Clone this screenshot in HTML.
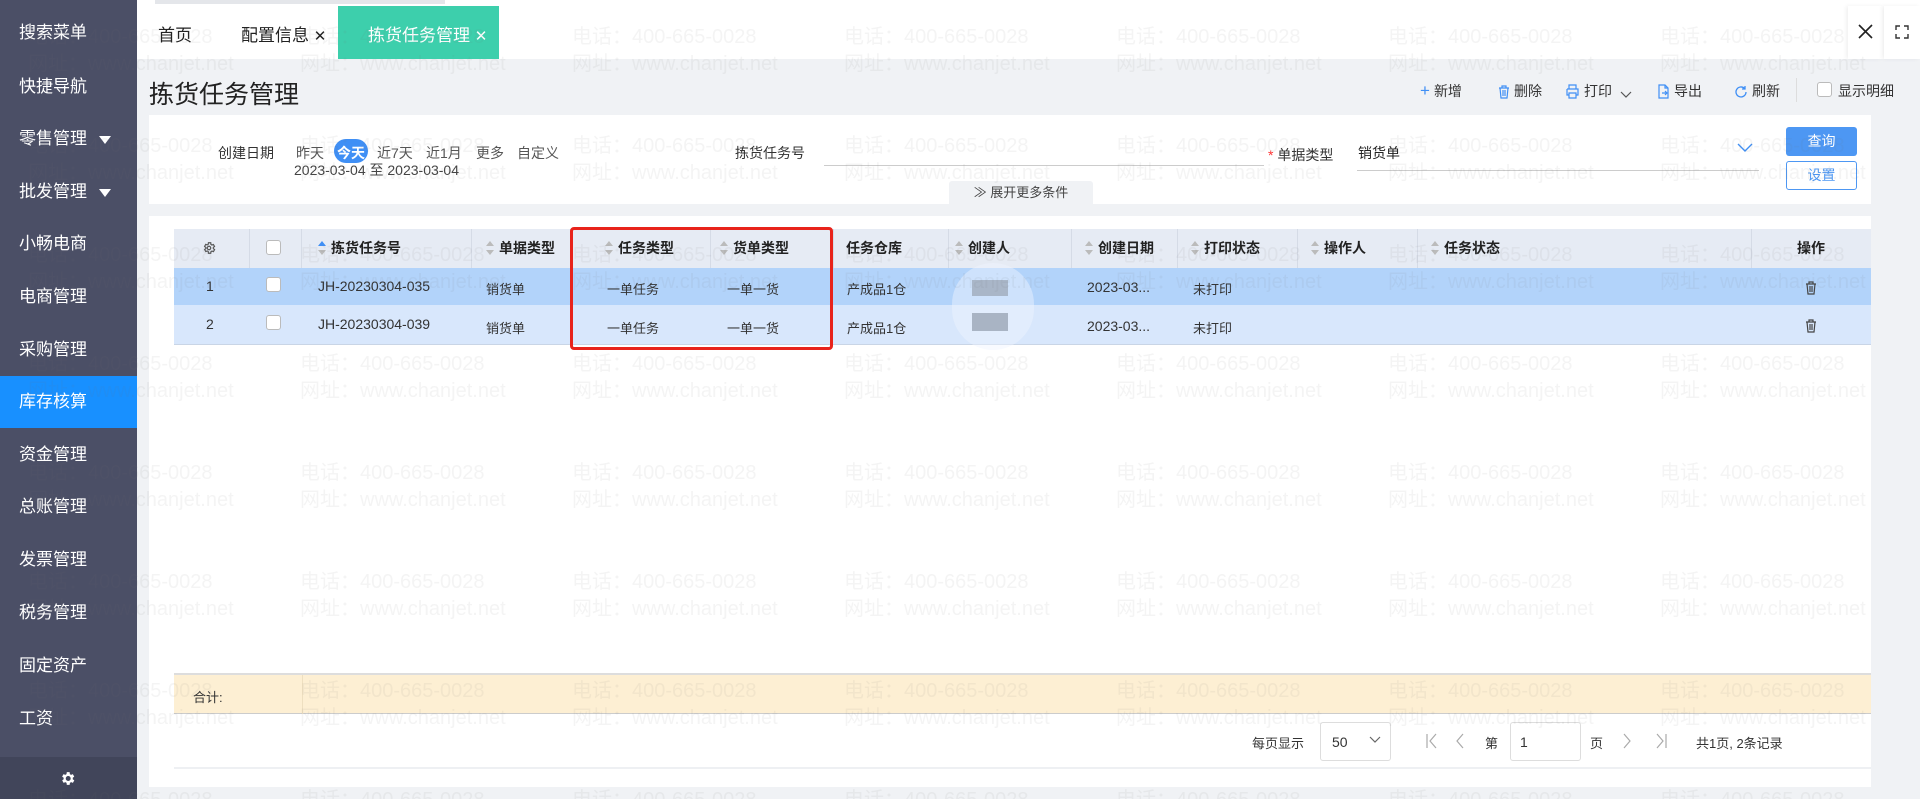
<!DOCTYPE html>
<html style="height:799px;overflow:hidden"><head><meta charset="utf-8">
<style>
*{margin:0;padding:0;box-sizing:border-box}
body{width:1920px;height:799px;position:relative;overflow:hidden;background:#f0f2f5;font-family:"Liberation Sans","Noto Sans CJK SC",sans-serif;color:#333;font-size:14px}
.a{position:absolute;white-space:nowrap}
#side{position:absolute;left:0;top:0;width:137px;height:799px;background:#4b4f66}
.si{position:absolute;left:0;width:137px;height:52px;line-height:52px;padding-left:19px;color:#fff;font-size:17px}
.si.act{background:#1890ff}
.tri{display:inline-block;width:0;height:0;border-left:6px solid transparent;border-right:6px solid transparent;border-top:8px solid #fff;margin-left:12px;vertical-align:middle}
.th{position:absolute;top:229px;height:39px;line-height:39px;font-weight:bold;font-size:14px;color:#222}
.sort{display:inline-block;width:8px;height:14px;vertical-align:middle;margin-right:5px;position:relative;top:-1px}
.sort:before{content:"";position:absolute;left:0;top:0;border-left:4px solid transparent;border-right:4px solid transparent;border-bottom:5px solid #bbb}
.sort:after{content:"";position:absolute;left:0;bottom:0;border-left:4px solid transparent;border-right:4px solid transparent;border-top:5px solid #bbb}
.sort.up:before{border-bottom-color:#3f8ff5}
.vl{position:absolute;top:229px;width:1px;height:39px;background:#d5dbe6}
.td{position:absolute;font-size:13px;color:#333}
.cb{position:absolute;width:15px;height:15px;border:1px solid #bbb;border-radius:3px;background:#fff}
.wm{position:absolute;font-size:20px;color:rgba(110,110,110,0.08);white-space:nowrap;pointer-events:none;z-index:50}
.tb{position:absolute;top:81px;font-size:14px;color:#333}
.tb svg{vertical-align:-3px;margin-right:4px}
</style></head><body>

<div id="side">
<div class="si" style="top:7px">搜索菜单</div>
<div class="si" style="top:61px">快捷导航</div>
<div class="si" style="top:113px">零售管理<span class="tri"></span></div>
<div class="si" style="top:166px">批发管理<span class="tri"></span></div>
<div class="si" style="top:218px">小畅电商</div>
<div class="si" style="top:271px">电商管理</div>
<div class="si" style="top:324px">采购管理</div>
<div class="si act" style="top:376px">库存核算</div>
<div class="si" style="top:429px">资金管理</div>
<div class="si" style="top:481px">总账管理</div>
<div class="si" style="top:534px">发票管理</div>
<div class="si" style="top:587px">税务管理</div>
<div class="si" style="top:640px">固定资产</div>
<div class="si" style="top:693px">工资</div>
<div style="position:absolute;left:0;top:757px;width:137px;height:42px;background:#41455a"></div>
<svg class="a" style="left:59px;top:770px" width="17" height="17" viewBox="0 0 24 24"><path fill="#fff" d="M19.4 13a7.5 7.5 0 000-2l2.1-1.6-2-3.5-2.5 1a7.6 7.6 0 00-1.7-1L15 3h-4l-.4 2.8a7.6 7.6 0 00-1.7 1l-2.5-1-2 3.5L6.6 11a7.5 7.5 0 000 2l-2.1 1.6 2 3.5 2.5-1a7.6 7.6 0 001.7 1L11 21h4l.4-2.8a7.6 7.6 0 001.7-1l2.5 1 2-3.5zM13 15.5a3.5 3.5 0 110-7 3.5 3.5 0 010 7z"/></svg>
</div>

<div style="position:absolute;left:137px;top:0;width:1783px;height:59px;background:#fff"></div>
<div style="position:absolute;left:155px;top:0;width:290px;height:4px;background:#e4e6ea"></div>
<div class="a" style="left:158px;top:21px;font-size:17px;color:#222">首页</div>
<div class="a" style="left:241px;top:21px;font-size:17px;color:#222">配置信息 <span style="font-size:15px">✕</span></div>
<div style="position:absolute;left:338px;top:6px;width:161px;height:53px;background:#3dcfac"></div>
<div class="a" style="left:368px;top:21px;font-size:17px;color:#fff">拣货任务管理 <span style="font-size:15px">✕</span></div>
<div style="position:absolute;left:1848px;top:6px;width:35px;height:53px;background:#fff;box-shadow:-2px 0 4px rgba(0,0,0,.06)"></div>
<div style="position:absolute;left:1884px;top:6px;width:36px;height:53px;background:#fff;box-shadow:-2px 0 4px rgba(0,0,0,.06)"></div>
<svg class="a" style="left:1858px;top:24px" width="15" height="15" viewBox="0 0 15 15"><path d="M1 1L14 14M14 1L1 14" stroke="#222" stroke-width="1.6"/></svg>
<svg class="a" style="left:1895px;top:25px" width="14" height="14" viewBox="0 0 14 14"><path d="M1 5V1h4M9 1h4v4M13 9v4H9M5 13H1V9" fill="none" stroke="#333" stroke-width="1.4"/></svg>

<div class="a" style="left:149px;top:75px;font-size:25px;color:#222">拣货任务管理</div>
<div class="tb" style="left:1420px"><span style="color:#3f8ff5;font-size:17px;margin-right:4px">+</span>新增</div>
<div class="tb" style="left:1498px"><svg width="12" height="15" viewBox="0 0 12 15"><path d="M1 4h10M4 4V2h4v2M2 4l1 10h6l1-10M5 6v6M7 6v6" fill="none" stroke="#3f8ff5" stroke-width="1.2"/></svg>删除</div>
<div class="tb" style="left:1565px"><svg width="15" height="15" viewBox="0 0 15 15"><path d="M4 5V1h7v4M2 5h11v6h-2M4 11H2V5M4 9h7v5H4z" fill="none" stroke="#3f8ff5" stroke-width="1.2"/></svg>打印 <svg width="12" height="8" viewBox="0 0 12 8" style="margin-left:4px"><path d="M1 1l5 5 5-5" fill="none" stroke="#555" stroke-width="1.2"/></svg></div>
<div class="tb" style="left:1657px"><svg width="13" height="15" viewBox="0 0 13 15"><path d="M8 1H2v13h9V4zM8 1v3h3M5 9h5M8 7l2 2-2 2" fill="none" stroke="#3f8ff5" stroke-width="1.2"/></svg>导出</div>
<div class="tb" style="left:1734px"><svg width="14" height="14" viewBox="0 0 14 14"><path d="M12 7a5 5 0 11-1.5-3.6M11 1v3H8" fill="none" stroke="#3f8ff5" stroke-width="1.3"/></svg>刷新</div>
<div style="position:absolute;left:1796px;top:78px;width:1px;height:24px;background:#ddd"></div>
<div class="cb" style="left:1817px;top:82px"></div>
<div class="tb" style="left:1838px">显示明细</div>

<div style="position:absolute;left:149px;top:115px;width:1722px;height:89px;background:#fff"></div>
<div class="a" style="left:218px;top:143px;font-size:14px">创建日期</div>
<div class="a" style="left:296px;top:143px;font-size:14px;color:#555">昨天</div>
<div style="position:absolute;left:334px;top:139px;width:34px;height:24px;border-radius:12px;background:#3f8ff5"></div>
<div class="a" style="left:337px;top:143px;font-size:14px;color:#fff;font-weight:bold">今天</div>
<div class="a" style="left:377px;top:143px;font-size:14px;color:#555">近7天</div>
<div class="a" style="left:426px;top:143px;font-size:14px;color:#555">近1月</div>
<div class="a" style="left:476px;top:143px;font-size:14px;color:#555">更多</div>
<div class="a" style="left:517px;top:143px;font-size:14px;color:#555">自定义</div>
<div class="a" style="left:294px;top:160px;font-size:14px;color:#444">2023-03-04 至 2023-03-04</div>
<div class="a" style="left:735px;top:143px;font-size:14px">拣货任务号</div>
<div style="position:absolute;left:824px;top:165px;width:440px;height:1px;background:#ccc"></div>
<div class="a" style="left:1268px;top:145px;font-size:14px"><span style="color:#f33">*</span> 单据类型</div>
<div class="a" style="left:1358px;top:143px;font-size:14px;color:#222">销货单</div>
<div style="position:absolute;left:1357px;top:170px;width:402px;height:1px;background:#ccc"></div>
<svg class="a" style="left:1737px;top:143px" width="16" height="10" viewBox="0 0 16 10"><path d="M1 1l7 7 7-7" fill="none" stroke="#3f8ff5" stroke-width="1.4"/></svg>
<div style="position:absolute;left:1786px;top:127px;width:71px;height:29px;border-radius:3px;background:#4d97f3;color:#fff;font-size:14px;text-align:center;line-height:29px">查询</div>
<div style="position:absolute;left:1786px;top:161px;width:71px;height:29px;border-radius:3px;border:1px solid #4d97f3;background:#fff;color:#4d97f3;font-size:14px;text-align:center;line-height:27px">设置</div>
<div style="position:absolute;left:949px;top:181px;width:144px;height:23px;background:#f0f2f5;border-radius:3px 3px 0 0;font-size:13px;text-align:center;line-height:23px;color:#444">≫ 展开更多条件</div>

<div style="position:absolute;left:149px;top:216px;width:1722px;height:571px;background:#fff"></div>
<div style="position:absolute;left:174px;top:229px;width:1697px;height:39px;background:#e6ebf4"></div>
<div style="position:absolute;left:174px;top:268px;width:1697px;height:37px;background:#b2d3fa"></div>
<div style="position:absolute;left:174px;top:305px;width:1697px;height:39px;background:#d8e7fc"></div>
<div style="position:absolute;left:174px;top:344px;width:1697px;height:1px;background:#c9d5e6"></div>
<div class="vl" style="left:249px"></div><div class="vl" style="left:301px"></div><div class="vl" style="left:471px"></div><div class="vl" style="left:571px"></div><div class="vl" style="left:710px"></div><div class="vl" style="left:833px"></div><div class="vl" style="left:948px"></div><div class="vl" style="left:1071px"></div><div class="vl" style="left:1177px"></div><div class="vl" style="left:1297px"></div><div class="vl" style="left:1417px"></div><div class="vl" style="left:1751px"></div>
<svg class="a" style="left:202px;top:241px" width="14" height="14" viewBox="0 0 24 24"><path fill="none" stroke="#555" stroke-width="2" d="M19.4 13a7.5 7.5 0 000-2l2.1-1.6-2-3.5-2.5 1a7.6 7.6 0 00-1.7-1L15 3h-4l-.4 2.8a7.6 7.6 0 00-1.7 1l-2.5-1-2 3.5L6.6 11a7.5 7.5 0 000 2l-2.1 1.6 2 3.5 2.5-1a7.6 7.6 0 001.7 1L11 21h4l.4-2.8a7.6 7.6 0 001.7-1l2.5 1 2-3.5zM12 15a3 3 0 110-6 3 3 0 010 6z"/></svg>
<div class="cb" style="left:266px;top:240px"></div>
<div class="th" style="left:318px"><span class="sort up"></span>拣货任务号</div>
<div class="th" style="left:486px"><span class="sort"></span>单据类型</div>
<div class="th" style="left:605px"><span class="sort"></span>任务类型</div>
<div class="th" style="left:720px"><span class="sort"></span>货单类型</div>
<div class="th" style="left:846px">任务仓库</div>
<div class="th" style="left:955px"><span class="sort"></span>创建人</div>
<div class="th" style="left:1085px"><span class="sort"></span>创建日期</div>
<div class="th" style="left:1191px"><span class="sort"></span>打印状态</div>
<div class="th" style="left:1311px"><span class="sort"></span>操作人</div>
<div class="th" style="left:1431px"><span class="sort"></span>任务状态</div>
<div class="th" style="left:1797px">操作</div>

<div class="td" style="left:206px;top:278px;font-size:14px">1</div>
<div class="td" style="left:206px;top:316px;font-size:14px">2</div>
<div class="cb" style="left:266px;top:277px"></div>
<div class="cb" style="left:266px;top:315px"></div>
<div class="td" style="left:318px;top:278px;font-size:14px">JH-20230304-035</div>
<div class="td" style="left:318px;top:316px;font-size:14px">JH-20230304-039</div>
<div class="td" style="left:486px;top:279px">销货单</div><div class="td" style="left:486px;top:318px">销货单</div>
<div class="td" style="left:607px;top:279px">一单任务</div><div class="td" style="left:607px;top:318px">一单任务</div>
<div class="td" style="left:727px;top:279px">一单一货</div><div class="td" style="left:727px;top:318px">一单一货</div>
<div class="td" style="left:847px;top:279px">产成品1仓</div><div class="td" style="left:847px;top:318px">产成品1仓</div>
<div style="position:absolute;left:952px;top:263px;width:82px;height:87px;border-radius:41px;background:rgba(240,245,255,.45)"></div>
<div style="position:absolute;left:972px;top:280px;width:36px;height:16px;background:#a9b6c8"></div>
<div style="position:absolute;left:972px;top:313px;width:36px;height:18px;background:#a9b4c4"></div>
<div class="td" style="left:1087px;top:279px;font-size:14px">2023-03...</div><div class="td" style="left:1087px;top:318px;font-size:14px">2023-03...</div>
<div class="td" style="left:1193px;top:279px">未打印</div><div class="td" style="left:1193px;top:318px">未打印</div>
<svg class="a" style="left:1805px;top:280px" width="12" height="15" viewBox="0 0 12 15"><path d="M1 4h10M4 4V2h4v2M2 4l1 10h6l1-10M5 6v6M7 6v6" fill="none" stroke="#444" stroke-width="1.2"/></svg>
<svg class="a" style="left:1805px;top:318px" width="12" height="15" viewBox="0 0 12 15"><path d="M1 4h10M4 4V2h4v2M2 4l1 10h6l1-10M5 6v6M7 6v6" fill="none" stroke="#444" stroke-width="1.2"/></svg>
<div style="position:absolute;left:570px;top:227px;width:263px;height:123px;border:3px solid #e8231b;border-radius:4px"></div>

<div style="position:absolute;left:174px;top:673px;width:1697px;height:2px;background:#ddd"></div>
<div style="position:absolute;left:174px;top:675px;width:1697px;height:39px;background:#fdefd3;border-bottom:1px solid #ccc"></div>
<div style="position:absolute;left:302px;top:675px;width:1px;height:39px;background:#eedfc0"></div>
<div class="a" style="left:193px;top:687px;font-size:13px">合计:</div>

<div class="a" style="left:1252px;top:733px;font-size:13px">每页显示</div>
<div style="position:absolute;left:1320px;top:722px;width:71px;height:39px;border:1px solid #ddd;border-radius:3px;background:#fff"></div>
<div class="a" style="left:1332px;top:734px;font-size:14px">50</div>
<svg class="a" style="left:1369px;top:736px" width="12" height="8" viewBox="0 0 12 8"><path d="M1 1l5 5 5-5" fill="none" stroke="#666" stroke-width="1.2"/></svg>
<svg class="a" style="left:1425px;top:733px" width="60" height="16" viewBox="0 0 60 16"><path d="M2 1v14M11 1L5 8l6 7M38 1l-6 7 6 7" fill="none" stroke="#aaa" stroke-width="1.2"/></svg>
<div class="a" style="left:1485px;top:733px;font-size:13px">第</div>
<div style="position:absolute;left:1510px;top:722px;width:71px;height:39px;border:1px solid #ddd;border-radius:3px;background:#fff"></div>
<div class="a" style="left:1520px;top:734px;font-size:14px">1</div>
<div class="a" style="left:1590px;top:733px;font-size:13px">页</div>
<svg class="a" style="left:1622px;top:733px" width="50" height="16" viewBox="0 0 50 16"><path d="M2 1l6 7-6 7M35 1l6 7-6 7M44 1v14" fill="none" stroke="#aaa" stroke-width="1.2"/></svg>
<div class="a" style="left:1696px;top:733px;font-size:13px">共1页, 2条记录</div>
<div style="position:absolute;left:174px;top:767px;width:1697px;height:2px;background:#eef0f3"></div>

<div id="wm"></div>
<script>
var h='';var xs=[28,300,572,844,1116,1388,1660];
for(var r=0;r<8;r++){var y=20+r*109;for(var c=0;c<xs.length;c++){h+='<div class="wm" style="left:'+xs[c]+'px;top:'+y+'px">电话：400-665-0028</div>';if(y+27<780)h+='<div class="wm" style="left:'+xs[c]+'px;top:'+(y+27)+'px">网址：www.chanjet.net</div>';}}
document.getElementById('wm').innerHTML=h;
</script>
</body></html>
